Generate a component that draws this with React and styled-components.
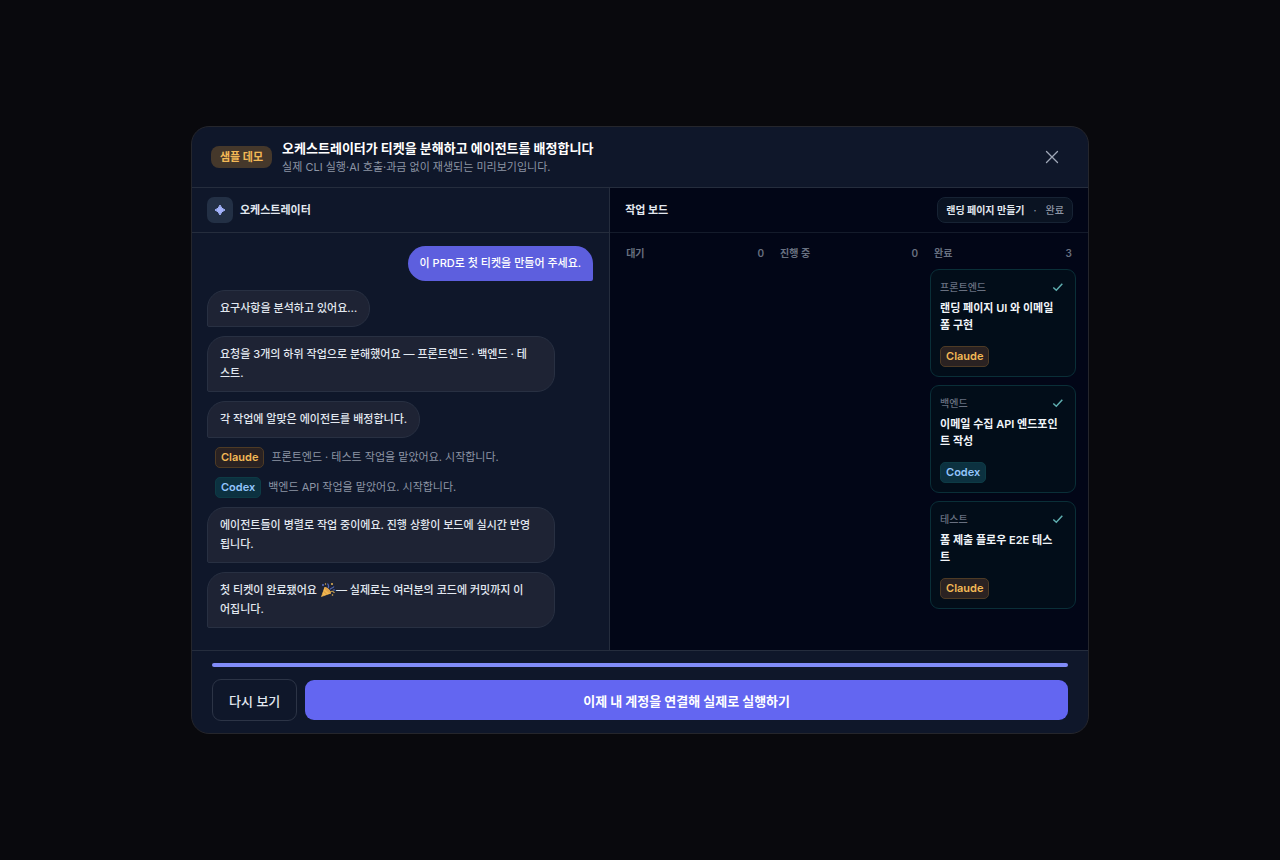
import styled, { createGlobalStyle } from "styled-components";

const Colors = {
  Backdrop: "#09090d",
  Panel: "#0f172a",
  Board: "#020617",
  Line: "#252d3d",
  Bubble: "#1e2334",
  Text: "#e2e8f0",
  Muted: "#8d95a5",
  Dim: "#687080",
  Primary: "#6366f1",
};

const GlobalStyle = createGlobalStyle`
  * {
    box-sizing: border-box;
  }
  body {
    margin: 0;
    background-color: ${Colors.Backdrop};
    color: ${Colors.Text};
    font-family: Inter, "Noto Sans CJK KR", sans-serif;
    -webkit-font-smoothing: antialiased;
  }
  h1, h2, h3, p {
    margin: 0;
  }
  button {
    font-family: inherit;
    cursor: pointer;
  }
`;

const Overlay = styled.main`
  min-height: 100vh;
  display: flex;
  align-items: center;
  justify-content: center;
  padding: 16px;
`;

const Dialog = styled.section`
  width: 100%;
  max-width: 898px;
  overflow: hidden;
  background-color: ${Colors.Panel};
  border: 1px solid #25262c;
  border-radius: 18px;
`;

const Header = styled.header`
  display: flex;
  align-items: center;
  gap: 10px;
  padding: 11px 18px 11px 19px;
  border-bottom: 1px solid ${Colors.Line};
`;

const DemoTag = styled.span`
  padding: 0 9px;
  border-radius: 8px;
  background-color: #45382b;
  color: #f3b956;
  font-size: 11px;
  font-weight: 700;
  line-height: 22px;
`;

const HeaderText = styled.div`
  flex: 1;
  min-width: 0;
`;

const Title = styled.h1`
  color: #ffffff;
  font-size: 13px;
  font-weight: 700;
  line-height: 20px;
`;

const Subtitle = styled.p`
  color: ${Colors.Muted};
  font-size: 11px;
  line-height: 18px;
`;

const CloseButton = styled.button`
  width: 36px;
  height: 36px;
  display: flex;
  align-items: center;
  justify-content: center;
  padding: 0;
  border: none;
  background: none;
  color: #a0a8b8;
`;

const Body = styled.div`
  display: grid;
  grid-template-columns: 7fr 8fr;
`;

const ChatPanel = styled.section`
  min-width: 0;
  border-right: 1px solid ${Colors.Line};
`;

const BoardPanel = styled.section`
  min-width: 0;
  background-color: ${Colors.Board};
`;

const PanelHeader = styled.div`
  height: 45px;
  display: flex;
  align-items: center;
  gap: 7px;
  padding: 0 15px;
  border-bottom: 1px solid ${(props) => props.$line || Colors.Line};
`;

const PanelTitle = styled.h2`
  color: ${Colors.Text};
  font-size: 11px;
  font-weight: 700;
  line-height: 16px;
`;

const Avatar = styled.span`
  width: 26px;
  height: 26px;
  display: flex;
  align-items: center;
  justify-content: center;
  border-radius: 7px;
  background-color: #233045;
  color: #a5b4fc;
`;

const Messages = styled.div`
  display: flex;
  flex-direction: column;
  align-items: flex-start;
  gap: 9px;
  padding: 13px 16px 22px 15px;
`;

const Bubble = styled.p`
  width: ${(props) => (props.$wide ? "90%" : "auto")};
  padding: 8px 12px;
  border: 1px solid #283042;
  border-radius: 18px 18px 18px 2px;
  background-color: ${Colors.Bubble};
  font-size: 11px;
  font-weight: 500;
  line-height: 19px;
  white-space: pre-line;
`;

const UserBubble = styled(Bubble)`
  align-self: flex-end;
  border: none;
  border-radius: 18px 18px 2px 18px;
  background-color: #5d5fde;
  color: #ffffff;
`;

const Party = styled.svg`
  width: 16px;
  height: 16px;
  vertical-align: -4px;
`;

const AgentRow = styled.div`
  height: 21px;
  display: flex;
  align-items: center;
  gap: 7px;
  padding-left: 8px;
`;

const AgentText = styled.p`
  color: ${Colors.Muted};
  font-size: 11px;
  line-height: 19px;
`;

const agentTones = {
  Claude: { text: "#f3b956", fill: "#2a2222", line: "#4e3b25" },
  Codex: { text: "#93c5fd", fill: "#0c3140", line: "#0d3b45" },
};

const AgentTag = styled.span`
  display: inline-block;
  padding: 0 5px;
  border: 1px solid ${(props) => agentTones[props.$agent].line};
  border-radius: 5px;
  background-color: ${(props) => agentTones[props.$agent].fill};
  color: ${(props) => agentTones[props.$agent].text};
  font-size: 11px;
  font-weight: 600;
  line-height: 19px;
`;

const TicketPill = styled.div`
  display: flex;
  align-items: center;
  gap: 9px;
  margin-left: auto;
  padding: 0 8px;
  border: 1px solid #172334;
  border-radius: 8px;
  background-color: #0a1322;
  color: ${Colors.Muted};
  font-size: 10px;
  font-weight: 500;
  line-height: 24px;
`;

const TicketName = styled.strong`
  color: ${Colors.Text};
  font-weight: 700;
`;

const Columns = styled.div`
  display: grid;
  grid-template-columns: repeat(3, minmax(0, 1fr));
  gap: 8px;
  padding: 12px;
`;

const Column = styled.div`
  display: flex;
  flex-direction: column;
  gap: 8px;
`;

const ColumnHead = styled.div`
  display: flex;
  justify-content: space-between;
  padding: 0 4px;
  color: ${Colors.Dim};
  font-size: 10px;
  font-weight: 600;
  line-height: 16px;
`;

const Card = styled.article`
  padding: 9px;
  border: 1px solid #0a2f38;
  border-radius: 9px;
  background-color: #020d19;
`;

const CardTop = styled.div`
  display: flex;
  align-items: center;
  justify-content: space-between;
  color: ${Colors.Dim};
  font-size: 10px;
  font-weight: 500;
  line-height: 16px;
`;

const CardTitle = styled.h3`
  margin: 5px 0 12px;
  color: #f1f5f9;
  font-size: 11px;
  font-weight: 600;
  line-height: 17px;
  white-space: pre-line;
`;

const CardAgent = styled.div`
  display: flex;
`;

const Footer = styled.footer`
  padding: 12px 20px;
  border-top: 1px solid ${Colors.Line};
`;

const Progress = styled.div`
  height: 4px;
  margin-bottom: 12px;
  border-radius: 2px;
  background-color: #818cf8;
`;

const Actions = styled.div`
  display: flex;
  align-items: center;
  gap: 8px;
`;

const Button = styled.button`
  height: 42px;
  padding: 0 16px;
  border: 1px solid #2c3446;
  border-radius: 9px;
  background: none;
  color: ${Colors.Text};
  font-size: 13px;
  font-weight: 500;
`;

const PrimaryButton = styled(Button)`
  flex: 1;
  height: 40px;
  border: none;
  background-color: ${Colors.Primary};
  color: #ffffff;
  font-weight: 700;
`;

const columns = [
  { name: "대기", cards: [] },
  { name: "진행 중", cards: [] },
  {
    name: "완료",
    cards: [
      { area: "프론트엔드", title: "랜딩 페이지 UI 와 이메일\n폼 구현", agent: "Claude" },
      { area: "백엔드", title: "이메일 수집 API 엔드포인\n트 작성", agent: "Codex" },
      { area: "테스트", title: "폼 제출 플로우 E2E 테스\n트", agent: "Claude" },
    ],
  },
];

function PartyIcon() {
  return (
    <Party viewBox="0 0 16 16" role="img" aria-label="축하">
      <path d="M1 15 4.500 5C8 5.500 11 9 11 11.500Z" fill="#f2b84f" />
      <path d="m3.400 9 3.800 3.800M2.200 12.300l1.600 1.600" stroke="#c98a3f" strokeWidth=".8" />
      <ellipse cx="7.700" cy="8.300" rx="1.400" ry="4" transform="rotate(-45 7.700 8.300)" fill="#e0a24a" />
      <path d="M8 6C9.500 4.500 8.500 3 7.500 1.500M10 7.500c1-2 3-1 4-3" stroke="#5267b5" strokeWidth="1.200" fill="none" />
      <path d="M10.500 10c1.500-1.500 3-.500 4 1" stroke="#b7954f" strokeWidth="1.200" fill="none" />
      <g fill="#596fc4">
        <circle cx="3" cy="3" r="1" />
        <circle cx="14" cy="8" r=".8" />
      </g>
      <g fill="#e5b456">
        <circle cx="5.500" cy="2" r=".7" />
        <circle cx="12" cy="2" r="1" />
        <circle cx="12.500" cy="13" r=".8" />
      </g>
    </Party>
  );
}

function TicketCard({ area, title, agent }) {
  return (
    <Card>
      <CardTop>
        {area}
        <svg width="16" height="16" viewBox="0 0 16 16" fill="none" stroke="#5faeb0" strokeWidth="1.5" aria-hidden="true">
          <path d="m3.300 8.500 3 2.700 6-6.500" />
        </svg>
      </CardTop>
      <CardTitle>{title}</CardTitle>
      <CardAgent>
        <AgentTag $agent={agent}>{agent}</AgentTag>
      </CardAgent>
    </Card>
  );
}

export default function App() {
  return (
    <>
      <GlobalStyle />
      <Overlay>
        <Dialog role="dialog" aria-labelledby="demo-title">
          <Header>
            <DemoTag>샘플 데모</DemoTag>
            <HeaderText>
              <Title id="demo-title">오케스트레이터가 티켓을 분해하고 에이전트를 배정합니다</Title>
              <Subtitle>실제 CLI 실행·AI 호출·과금 없이 재생되는 미리보기입니다.</Subtitle>
            </HeaderText>
            <CloseButton aria-label="닫기">
              <svg width="14" height="14" viewBox="0 0 14 14" stroke="currentColor" strokeWidth="1.3" strokeLinecap="round">
                <path d="m1.500 1.500 11 11m0-11-11 11" />
              </svg>
            </CloseButton>
          </Header>
          <Body>
            <ChatPanel>
              <PanelHeader>
                <Avatar>
                  <svg width="12" height="12" viewBox="0 0 12 12" fill="currentColor" aria-hidden="true">
                    <path d="M6 1Q7.200 4.800 11 6 7.200 7.200 6 11 4.800 7.200 1 6 4.800 4.800 6 1Z" stroke="currentColor" strokeLinejoin="round" />
                  </svg>
                </Avatar>
                <PanelTitle>오케스트레이터</PanelTitle>
              </PanelHeader>
              <Messages>
                <UserBubble>이 PRD로 첫 티켓을 만들어 주세요.</UserBubble>
                <Bubble>요구사항을 분석하고 있어요…</Bubble>
                <Bubble $wide>{"요청을 3개의 하위 작업으로 분해했어요 — 프론트엔드 · 백엔드 · 테\n스트."}</Bubble>
                <Bubble>각 작업에 알맞은 에이전트를 배정합니다.</Bubble>
                <AgentRow>
                  <AgentTag $agent="Claude">Claude</AgentTag>
                  <AgentText>프론트엔드 · 테스트 작업을 맡았어요. 시작합니다.</AgentText>
                </AgentRow>
                <AgentRow>
                  <AgentTag $agent="Codex">Codex</AgentTag>
                  <AgentText>백엔드 API 작업을 맡았어요. 시작합니다.</AgentText>
                </AgentRow>
                <Bubble $wide>{"에이전트들이 병렬로 작업 중이에요. 진행 상황이 보드에 실시간 반영\n됩니다."}</Bubble>
                <Bubble $wide>
                  첫 티켓이 완료됐어요 <PartyIcon />— 실제로는 여러분의 코드에 커밋까지 이
                  <br />
                  어집니다.
                </Bubble>
              </Messages>
            </ChatPanel>
            <BoardPanel>
              <PanelHeader $line="#141b2b">
                <PanelTitle>작업 보드</PanelTitle>
                <TicketPill>
                  <TicketName>랜딩 페이지 만들기</TicketName>
                  <span>·</span>
                  <span>완료</span>
                </TicketPill>
              </PanelHeader>
              <Columns>
                {columns.map((column) => (
                  <Column key={column.name}>
                    <ColumnHead>
                      <span>{column.name}</span>
                      <span>{column.cards.length}</span>
                    </ColumnHead>
                    {column.cards.map((card) => (
                      <TicketCard key={card.area} {...card} />
                    ))}
                  </Column>
                ))}
              </Columns>
            </BoardPanel>
          </Body>
          <Footer>
            <Progress role="progressbar" aria-label="데모 진행률" aria-valuenow={100} />
            <Actions>
              <Button>다시 보기</Button>
              <PrimaryButton>이제 내 계정을 연결해 실제로 실행하기</PrimaryButton>
            </Actions>
          </Footer>
        </Dialog>
      </Overlay>
    </>
  );
}
